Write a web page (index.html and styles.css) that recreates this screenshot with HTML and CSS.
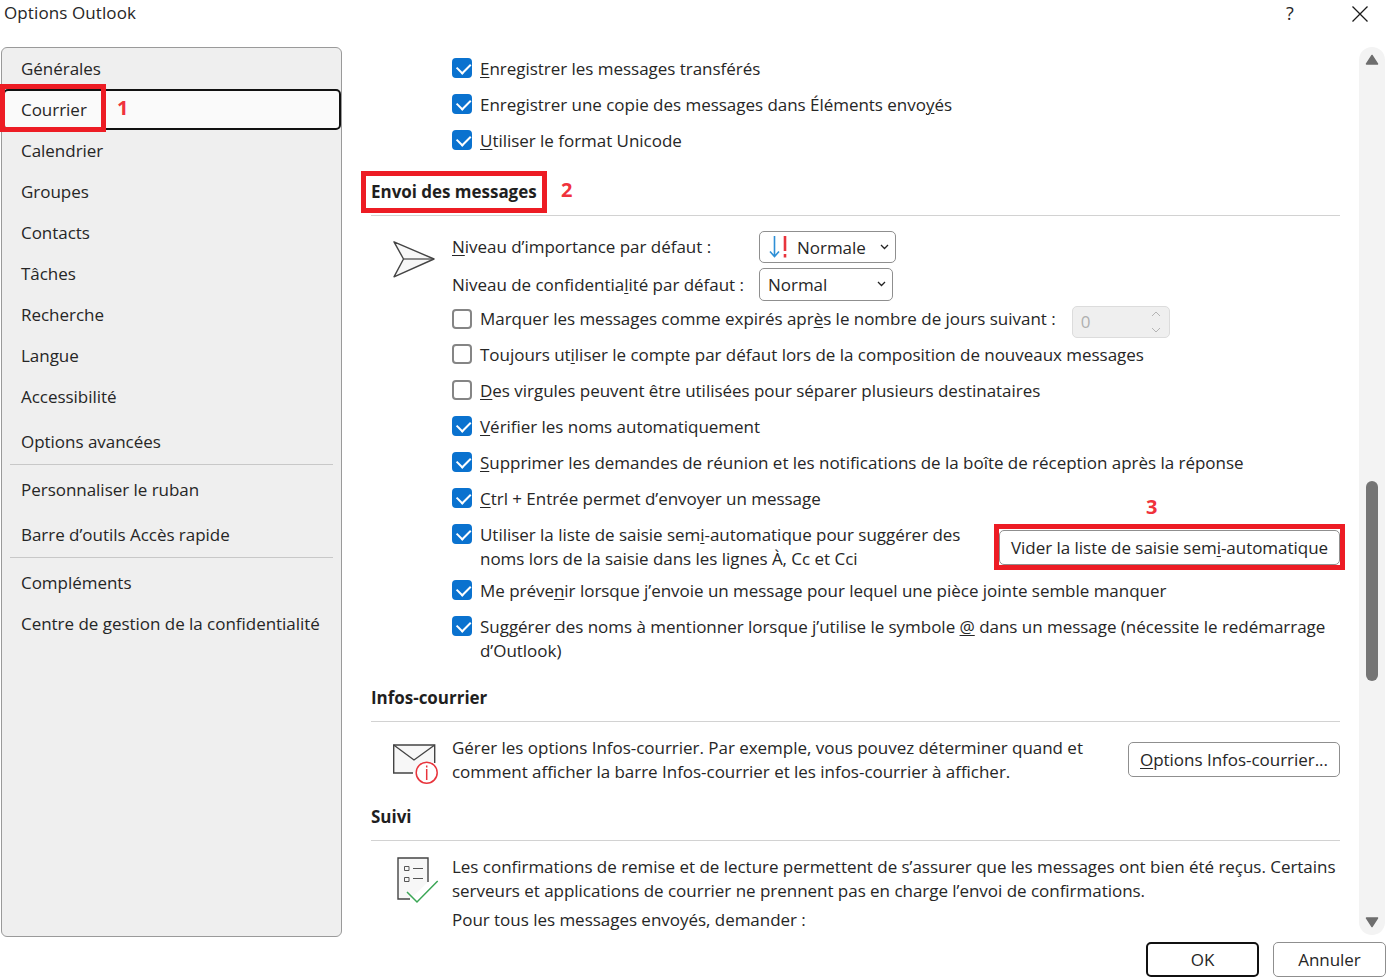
FILE: index.html
```html
<!DOCTYPE html>
<html lang="fr">
<head>
<meta charset="utf-8">
<title>Options Outlook</title>
<link rel="stylesheet" href="styles.css">
</head>
<body>
<div class="dialog">
  <header class="titlebar">
    <span class="title">Options Outlook</span>
    <span class="help">?</span>
    <svg class="close" width="18" height="18" viewBox="0 0 18 18"><path d="M1.5 1.5 16.5 16.5M16.5 1.5 1.5 16.5" fill="none" stroke="#1a1a1a" stroke-width="1.3"/></svg>
  </header>
  <div class="body">
    <nav class="sidebar">
      <div class="nav-item">Générales</div>
      <div class="nav-item active">Courrier</div>
      <div class="nav-item">Calendrier</div>
      <div class="nav-item">Groupes</div>
      <div class="nav-item">Contacts</div>
      <div class="nav-item">Tâches</div>
      <div class="nav-item">Recherche</div>
      <div class="nav-item">Langue</div>
      <div class="nav-item">Accessibilité</div>
      <div class="nav-item spaced">Options avancées</div>
      <div class="nav-sep"></div>
      <div class="nav-item">Personnaliser le ruban</div>
      <div class="nav-item spaced-small">Barre d’outils Accès rapide</div>
      <div class="nav-sep"></div>
      <div class="nav-item">Compléments</div>
      <div class="nav-item">Centre de gestion de la confidentialité</div>
    </nav>
    <main class="content">
      <div class="rows first">
        <label class="row"><span class="cb on"></span><span><u>E</u>nregistrer les messages transférés</span></label>
        <label class="row"><span class="cb on"></span><span>Enregistrer une copie des messages dans Éléments envo<u>y</u>és</span></label>
        <label class="row"><span class="cb on"></span><span><u>U</u>tiliser le format Unicode</span></label>
      </div>
      <h2 class="heading h-envoi">Envoi des messages</h2>
      <div class="section">
        <div class="icon-col">
          <svg class="icon-send" width="42" height="37" viewBox="0 0 42 37"><path d="M1 .8 41 18 1 35.800 10.500 18Z" fill="#f7f7f7" stroke="#444" stroke-width="1.400" stroke-linejoin="round"/><path d="M10.500 18H41" stroke="#444" stroke-width="1.200"/></svg>
        </div>
        <div class="section-main">
          <div class="select-row r1">
            <span class="select-label label-up"><u>N</u>iveau d’importance par défaut :</span>
            <div class="select s-importance">
              <svg class="prio" width="20" height="24" viewBox="0 0 20 24"><path d="M5.500 1V21M1 16.500 5.500 21.500 10 16.500" fill="none" stroke="#2e8fd6" stroke-width="1.600"/><path d="M16 1V16" stroke="#e8343c" stroke-width="2.600"/><path d="M16 19V22.500" stroke="#e8343c" stroke-width="2.600"/></svg>
              <span>Normale</span>
              <svg class="chev" width="9" height="6" viewBox="0 0 9 6"><path d="M1 1 4.500 4.500 8 1" fill="none" stroke="#222" stroke-width="1.300"/></svg>
            </div>
          </div>
          <div class="select-row r2">
            <span class="select-label">Niveau de confidentia<u>l</u>ité par défaut :</span>
            <div class="select s-conf">
              <span>Normal</span>
              <svg class="chev" width="9" height="6" viewBox="0 0 9 6"><path d="M1 1 4.500 4.500 8 1" fill="none" stroke="#222" stroke-width="1.300"/></svg>
            </div>
          </div>
          <div class="rows">
            <div class="row spin-row">
              <span class="cb"></span><span>Marquer les messages comme expirés apr<u>è</u>s le nombre de jours suivant :</span>
              <div class="spin"><span>0</span>
                <svg width="10" height="24" viewBox="0 0 10 24"><path d="M1 6 5 2 9 6M1 18 5 22 9 18" fill="none" stroke="#b4b4b4" stroke-width="1"/></svg>
              </div>
            </div>
            <label class="row"><span class="cb"></span><span>Toujours ut<u>i</u>liser le compte par défaut lors de la composition de nouveaux messages</span></label>
            <label class="row"><span class="cb"></span><span><u>D</u>es virgules peuvent être utilisées pour séparer plusieurs destinataires</span></label>
            <label class="row"><span class="cb on"></span><span><u>V</u>érifier les noms automatiquement</span></label>
            <label class="row"><span class="cb on"></span><span><u>S</u>upprimer les demandes de réunion et les notifications de la boîte de réception après la réponse</span></label>
            <label class="row"><span class="cb on"></span><span><u>C</u>trl + Entrée permet d’envoyer un message</span></label>
            <div class="row tall with-button">
              <span class="cb on"></span>
              <span class="auto-text">Utiliser la liste de saisie sem<u>i</u>-automatique pour suggérer des noms lors de la saisie dans les lignes À, Cc et Cci</span>
              <button class="btn btn-clear">Vider la liste de saisie sem<u>i</u>-automatique</button>
            </div>
            <label class="row"><span class="cb on"></span><span>Me préve<u>n</u>ir lorsque j’envoie un message pour lequel une pièce jointe semble manquer</span></label>
            <label class="row tall"><span class="cb on"></span><span>Suggérer des noms à mentionner lorsque j’utilise le symbole <u>@</u> dans un message (nécessite le redémarrage d’Outlook)</span></label>
          </div>
        </div>
      </div>
      <h2 class="heading h-infos">Infos-courrier</h2>
      <div class="section">
        <div class="icon-col">
          <svg class="icon-mail" width="45" height="40" viewBox="0 0 45 40"><path d="M41.700 19V1H.7V29H20" fill="#f7f7f7" stroke="#444" stroke-width="1.400"/><path d="M.7 1 21 16 41.700 1" fill="none" stroke="#444" stroke-width="1.400"/><circle cx="33.700" cy="28.700" r="10.500" fill="#fff" stroke="#e8343c" stroke-width="1.500"/><path d="M33.700 25V36" stroke="#e8343c" stroke-width="1.500"/><path d="M33.700 21.500V23.500" stroke="#e8343c" stroke-width="1.500"/></svg>
        </div>
        <div class="section-main info-row">
          <p class="info-text">Gérer les options Infos-courrier. Par exemple, vous pouvez déterminer quand et comment afficher la barre Infos-courrier et les infos-courrier à afficher.</p>
          <button class="btn btn-infos"><u>O</u>ptions Infos-courrier...</button>
        </div>
      </div>
      <h2 class="heading h-suivi">Suivi</h2>
      <div class="section">
        <div class="icon-col">
          <svg class="icon-track" width="44" height="47" viewBox="0 0 44 47"><path d="M31 25V1H1V42H13" fill="#f7f7f7" stroke="#444" stroke-width="1.400"/><path d="M7.500 9.500H12V13.500H7.500ZM7.500 20.500H12V24.500H7.500Z" fill="none" stroke="#555" stroke-width="1"/><path d="M16 11.500H26M16 21.500H26" stroke="#555" stroke-width="1"/><path d="M10 35 20 45 40.700 24" fill="none" stroke="#3aa655" stroke-width="1.500"/></svg>
        </div>
        <div class="section-main">
          <p class="info-text">Les confirmations de remise et de lecture permettent de s’assurer que les messages ont bien été reçus. Certains serveurs et applications de courrier ne prennent pas en charge l’envoi de confirmations.</p>
          <p class="info-text last">Pour tous les messages envoyés, demander :</p>
        </div>
      </div>
    </main>
    <div class="scrollbar">
      <svg class="arrow" width="14" height="12" viewBox="0 0 14 12"><path d="M7 1.500 12.500 10H1.500Z" fill="#6e6e6e" stroke="#6e6e6e" stroke-width="1.500" stroke-linejoin="round"/></svg>
      <div class="track"><div class="thumb"></div></div>
      <svg class="arrow" width="14" height="12" viewBox="0 0 14 12"><path d="M7 10.500 12.500 2H1.500Z" fill="#6e6e6e" stroke="#6e6e6e" stroke-width="1.500" stroke-linejoin="round"/></svg>
    </div>
  </div>
  <footer class="footer">
    <button class="btn btn-ok">OK</button>
    <button class="btn btn-cancel">Annuler</button>
  </footer>
  <div class="mark box1"></div><span class="num n1">1</span>
  <div class="mark box2"></div><span class="num n2">2</span>
  <div class="mark box3"></div><span class="num n3">3</span>
</div>
</body>
</html>
```
FILE: styles.css
```css
* { box-sizing: border-box; }
html, body { margin: 0; padding: 0; }
body {
  background: #fff;
  color: #262626;
  font-family: "Open Sans", "Noto Sans", sans-serif;
  font-size: 17px;
  letter-spacing: -0.03px;
  overflow: hidden;
}
.dialog { position: relative; width: 1388px; height: 977px; overflow: hidden; }
.titlebar { height: 47px; display: flex; align-items: flex-start; position: relative; }
.title { margin-left: 4px; line-height: 26px; letter-spacing: 0.1px; }
.help { margin-left: auto; line-height: 26px; font-size: 18px; width: 17px; margin-right: 48px; }
.close { margin-top: 5px; margin-right: 19px; }
.body { display: flex; height: 890px; }
.sidebar {
  width: 341px; margin-left: 1px; height: 890px; flex: none;
  background: #efefef; border: 1px solid #9a9a9a; border-radius: 6px;
}
.nav-item { height: 41px; line-height: 41px; padding-left: 19px; white-space: nowrap; }
.nav-item.active {
  margin-left: 1px; padding-left: 16px;
  background: #fafafa; border: 2px solid #111; border-radius: 5px; line-height: 37px;
}
.nav-item.spaced { margin-top: 4px; }
.nav-item.spaced-small { margin-top: 4px; }
.nav-sep { height: 1px; background: #c8c8c8; margin: 2px 8px 4px 8px; }
.content { width: 1016px; flex: none; padding: 4px 18px 0 29px; height: 890px; overflow: hidden; }
.rows { display: flex; flex-direction: column; }
.rows.first { margin-left: 81px; }
.row { display: flex; align-items: flex-start; min-height: 36px; padding-top: 6px; line-height: 24px; }
.row.tall { min-height: 56px; padding-bottom: 0; }
.row .cb { margin-top: 1px; }
.cb {
  flex: none; width: 20px; height: 20px; margin-right: 8px;
  border: 2px solid #858585; border-radius: 4px; background: #fff; position: relative;
}
.cb.on { background: #0a72cf; border-color: #0a72cf; }
.cb.on::after {
  content: ""; position: absolute; left: 2.500px; top: 1px; width: 11px; height: 6.500px;
  border-left: 2px solid #fff; border-bottom: 2px solid #fff;
  transform: translate(0, 1.500px) rotate(-45deg);
}
u { text-underline-offset: 2px; text-decoration-thickness: 1px; }
.heading {
  margin: 0; font-size: 17px; font-weight: 700; color: #1f1f1f;
  line-height: 24px; padding-bottom: 11px; border-bottom: 1px solid #d2d2d2;
}
.h-envoi { margin-top: 21px; }
.h-infos { margin-top: 21px; }
.h-suivi { margin-top: 21px; }
.section { display: flex; }
.icon-col { width: 81px; flex: none; padding-left: 22px; }
.icon-col svg { display: block; }
.icon-send { margin-top: 25px; }
.icon-mail { margin-top: 22px; }
.icon-track { margin-top: 16px; margin-left: 4px; }
.section-main { flex: 1; min-width: 0; }
.select-row { display: flex; align-items: center; }
.r1 { margin-top: 15px; height: 32px; }
.r2 { margin-top: 5px; height: 33px; }
.select-label { width: 307px; flex: none; white-space: nowrap; }
.label-up { padding-bottom: 2px; }
.select {
  display: flex; align-items: center; height: 100%;
  border: 1px solid #8f8f8f; border-radius: 5px; background: #fff; padding-left: 8px; position: relative;
}
.s-importance { width: 137px; }
.s-conf { width: 134px; }
.prio { margin-right: 8px; margin-left: 1px; }
.chev { position: absolute; right: 6px; top: 12px; }
.spin-row { padding-top: 0; height: 33px; align-items: center; }
.spin-row .cb { margin-top: 0; }
.spin {
  width: 98px; height: 32px; margin-left: 16px; margin-top: 6px; flex: none;
  background: #efefef; border: 1px solid #dcdcdc; border-radius: 5px;
  display: flex; align-items: center; justify-content: space-between;
  padding: 0 8px; color: #b0b0b0;
}
.with-button { position: relative; }
.auto-text { width: 490px; }
.btn {
  font: inherit; letter-spacing: inherit; color: #262626; background: #fff;
  border: 1px solid #8f8f8f; border-radius: 5px; padding: 0; white-space: nowrap;
}
.btn-clear { margin-left: 29px; margin-top: 7px; width: 341px; height: 35px; }
.info-row { display: flex; align-items: flex-start; justify-content: space-between; padding-top: 14px; }
.info-text { margin: 0; line-height: 24px; }
.info-row .info-text { width: 640px; margin-top: 0; }
.section-main > .info-text:first-child { margin-top: 14px; }
.info-row > .info-text:first-child { margin-top: 0; }
.info-text.last { margin-top: 5px; }
.btn-infos { width: 212px; height: 35px; margin-top: 6px; }
.scrollbar {
  width: 26px; margin-left: 1px; height: 888px; flex: none;
  background: #f3f3f3; border-radius: 13px;
  display: flex; flex-direction: column; align-items: center; padding: 7px 0;
}
.track { flex: 1; width: 100%; position: relative; }
.thumb {
  position: absolute; left: 7px; top: 415px; width: 12px; height: 200px;
  background: #757575; border-radius: 6px;
}
.footer { display: flex; justify-content: flex-end; padding: 5px 2px 0 0; gap: 14px; height: 40px; }
.btn-ok { width: 113px; height: 35px; border: 2px solid #111; }
.btn-cancel { width: 113px; height: 35px; }
.mark { position: absolute; border: 5px solid #ed1c24; pointer-events: none; }
.box1 { left: 0; top: 84px; width: 106px; height: 48px; }
.box2 { left: 361px; top: 171px; width: 186px; height: 42px; }
.box3 { left: 994px; top: 524px; width: 351px; height: 46px; }
.num { position: absolute; color: #f0323c; font-weight: 700; font-size: 20px; line-height: 24px; }
.n1 { left: 117px; top: 96px; }
.n2 { left: 561px; top: 178px; }
.n3 { left: 1146px; top: 495px; }
```
